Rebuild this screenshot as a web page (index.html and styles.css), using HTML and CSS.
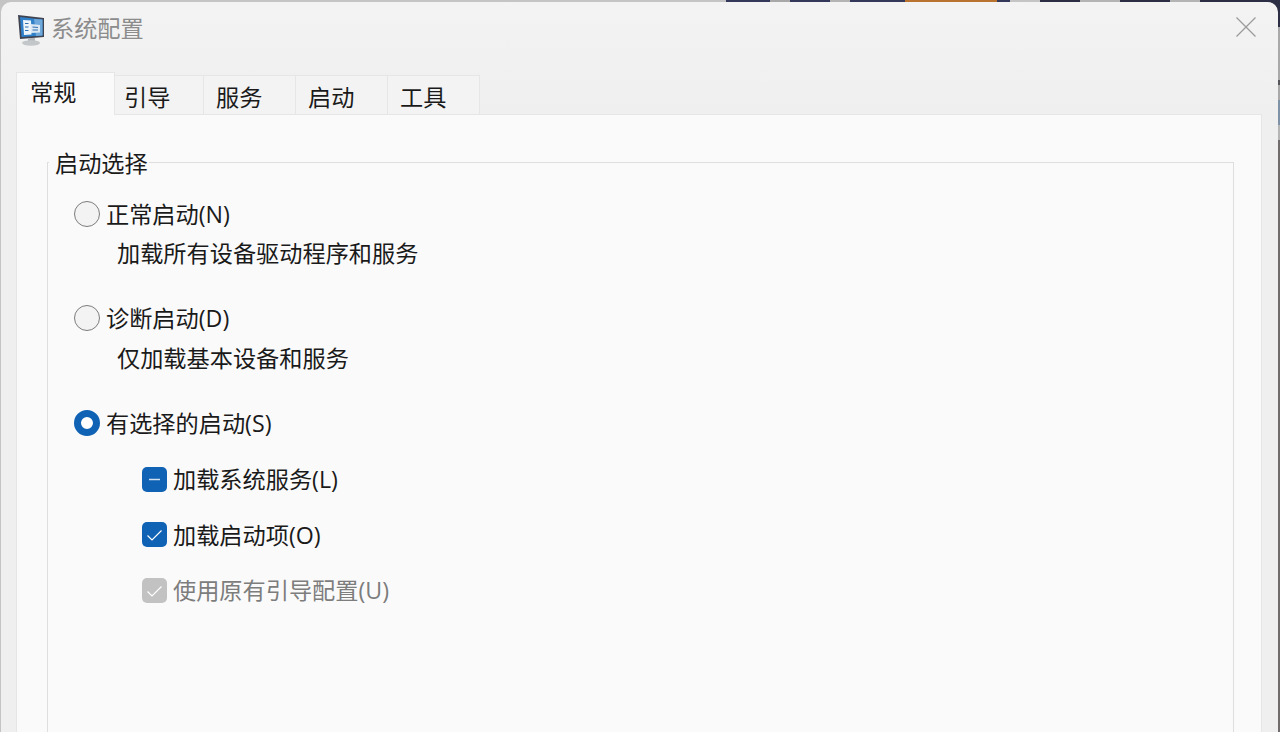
FILE: index.html
```html
<!DOCTYPE html>
<html lang="zh-CN">
<head>
<meta charset="utf-8">
<title>系统配置</title>
<link rel="stylesheet" href="styles.css">
</head>
<body>
<div class="window">
  <header class="titlebar">
    <svg class="appicon" width="30" height="32" viewBox="0 0 30 32">
      <path d="M2 1 L28 4 L28 23 L4 25 Z" fill="#3f4350"/>
      <path d="M4 3 L26.500 5.500 L26.500 21.500 L5.500 23 Z" fill="#2f7fc9"/>
      <path d="M18 5 L26.500 5.500 L26.500 21.500 L20 22 Z" fill="#6fa9dc"/>
      <path d="M7 6 L15 6.500 L15.500 20.500 L8 21 Z" fill="#eef5fb"/>
      <path d="M14.500 10 L24 11 L24 18.500 L15 19 Z" fill="#dbe8f3"/>
      <path d="M9 9.500 L12.500 9.500 M9 13 L12.500 13 M9 16.500 L12.500 16.500 M16.500 13 L22 13.500 M16.500 16 L22 16" stroke="#2f6fb0" stroke-width="1.200"/>
      <rect x="12" y="24" width="7" height="3" fill="#b4b7ba"/>
      <ellipse cx="15" cy="29" rx="9" ry="2.700" fill="#c4c7c9"/>
    </svg>
    <span class="title">系统配置</span>
    <svg class="close" width="20" height="20" viewBox="0 0 20 20">
      <path d="M0.500 0.500 L19.500 19.500 M19.500 0.500 L0.500 19.500" stroke="#9a9a9a" stroke-width="1.200" fill="none"/>
    </svg>
  </header>
  <nav class="tabs">
    <div class="tab active">常规</div>
    <div class="tab">引导</div>
    <div class="tab">服务</div>
    <div class="tab">启动</div>
    <div class="tab">工具</div>
  </nav>
  <main class="panel">
    <section class="group">
      <div class="legend">启动选择</div>
      <div class="option first">
        <span class="radio"></span><span class="label">正常启动(N)</span>
      </div>
      <div class="desc">加载所有设备驱动程序和服务</div>
      <div class="option second">
        <span class="radio"></span><span class="label">诊断启动(D)</span>
      </div>
      <div class="desc tall">仅加载基本设备和服务</div>
      <div class="option third">
        <span class="radio selected"></span><span class="label">有选择的启动(S)</span>
      </div>
      <div class="checks">
        <div class="check">
          <span class="box">
            <svg width="25" height="25" viewBox="0 0 25 25"><path d="M7 12.500 H18" stroke="#cfe0f2" stroke-width="1.500"/></svg>
          </span>
          <span class="label">加载系统服务(L)</span>
        </div>
        <div class="check">
          <span class="box">
            <svg width="25" height="25" viewBox="0 0 25 25"><path d="M5.500 13.500 L10 18 L19.500 8.500" stroke="#fff" stroke-width="1.200" fill="none"/></svg>
          </span>
          <span class="label">加载启动项(O)</span>
        </div>
        <div class="check disabled">
          <span class="box">
            <svg width="25" height="25" viewBox="0 0 25 25"><path d="M5.500 13.500 L10 18 L19.500 8.500" stroke="#fff" stroke-width="1.200" fill="none"/></svg>
          </span>
          <span class="label">使用原有引导配置(U)</span>
        </div>
      </div>
    </section>
  </main>
</div>
</body>
</html>
```

FILE: styles.css
```css
* { box-sizing: border-box; }
html, body { margin: 0; height: 100%; overflow: hidden; }
body {
  width: 1280px;
  height: 732px;
  padding: 2px 2px 0 1px;
  background-color: #c4c4c4;
  background-image:
    linear-gradient(180deg, #2b2e45 0, #2b2e45 27px, #a9a9a9 27px, #a9a9a9 80px, #55555a 80px, #55555a 85px, #a9a9a9 85px, #a9a9a9 100px, #7f93a8 100px, #7f93a8 125px, #b5b5b5 125px, #b5b5b5 140px, #6f6c6b 140px),
    linear-gradient(90deg, #c4c4c4 0, #c4c4c4 726px, #33375a 726px, #33375a 770px, #a8a8a8 770px, #a8a8a8 790px, #33375a 790px, #33375a 830px, #b4b4b4 830px, #b4b4b4 850px, #33375a 850px, #33375a 905px, #b9732e 905px, #b9732e 997px, #33375a 997px, #33375a 1010px, #c4c4c4 1010px, #c4c4c4 1040px, #2b2e45 1040px, #2b2e45 1080px, #b4b4b4 1080px, #b4b4b4 1120px, #2b2e45 1120px, #2b2e45 1170px, #b4b4b4 1170px, #b4b4b4 1200px, #2b2e45 1200px);
  background-size: 2px 100%, 100% 12px;
  background-position: right top, 0 0;
  background-repeat: no-repeat;
  font-family: "Open Sans", "Noto Sans CJK SC", sans-serif;
  color: #1a1a1a;
}
.window {
  width: 1277px;
  height: 730px;
  border-radius: 10px 10px 0 0;
  display: flex;
  flex-direction: column;
  background: linear-gradient(180deg, #f3f3f3 0, #efefef 114px);
}
.titlebar {
  height: 52px;
  display: flex;
  align-items: center;
  padding: 0 22px 0 15px;
  flex: none;
}
.appicon { flex: none; margin-top: 4px; }
.title { margin-left: 5px; font-size: 23.200px; color: #8c8c8c; line-height: 30px; }
.close { margin-left: auto; margin-top: -2px; }
.tabs {
  display: flex;
  align-items: flex-end;
  height: 60px;
  padding: 0 0 0 15px;
  flex: none;
}
.tab {
  width: 92px;
  height: 39px;
  background: #f3f3f3;
  border-right: 1px solid #e6e6e6;
  border-top: 1px solid #e6e6e6;
  font-size: 23.200px;
  line-height: 42px;
  padding-left: 12px;
}
.tab.active {
  width: 99px;
  height: 43px;
  margin-right: -3px;
  background: #fafafa;
  border: 1px solid #e6e6e6;
  border-bottom: 0;
  padding: 0 0 0 13px;
  line-height: 38px;
  position: relative;
  top: 1px;
  z-index: 1;
}
.panel {
  flex: 1;
  margin-left: 15px;
  margin-right: 16px;
  padding: 47px 27px 0 30px;
  background: #fafafa;
  border: 1px solid #e6e6e6;
  border-bottom: 0;
  min-height: 0;
}
.group {
  height: 100%;
  border: 1px solid #dedede;
  border-bottom: 0;
  position: relative;
  padding: 0 0 0 26px;
}
.legend {
  position: absolute;
  left: 1px;
  top: -14px;
  padding: 0 1px 0 6px;
  background: #fafafa;
  font-size: 23.200px;
  line-height: 28px;
}
.option {
  display: flex;
  align-items: center;
  height: 30px;
}
.option.first { margin-top: 36px; }
.option.second { margin-top: 35px; }
.option.third { margin-top: 35px; }
.radio {
  width: 26px;
  height: 26px;
  border-radius: 50%;
  border: 1.500px solid #7c7c7c;
  background: #f3f3f3;
  flex: none;
}
.radio.selected {
  background: #fff;
  border: 7.500px solid #0f62b4;
}
.label { font-size: 23.200px; line-height: 30px; margin-left: 6px; white-space: nowrap; }
.desc { font-size: 23.200px; line-height: 30px; margin: 9px 0 0 43px; }
.desc.tall { margin-top: 10px; }
.checks { margin: 26px 0 0 68px; display: flex; flex-direction: column; gap: 25.500px; }
.check { display: flex; align-items: center; height: 30px; }
.box {
  width: 25px;
  height: 25px;
  border-radius: 5px;
  background: #0f62b4;
  flex: none;
}
.box svg { display: block; }
.check.disabled .box { background: #c2c2c2; }
.check.disabled .label { color: #7d7d7d; }
```
